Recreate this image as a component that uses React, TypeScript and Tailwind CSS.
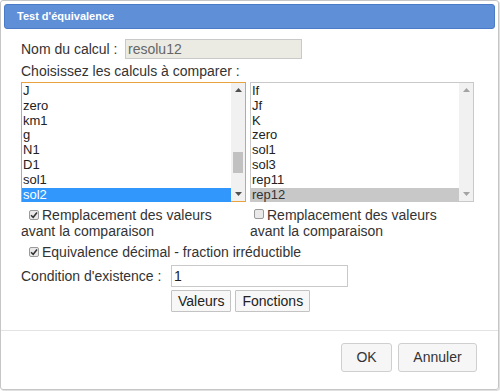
import React from 'react';

const leftItems = ['J', 'zero', 'km1', 'g', 'N1', 'D1', 'sol1', 'sol2'];
const rightItems = ['If', 'Jf', 'K', 'zero', 'sol1', 'sol3', 'rep11', 'rep12'];

const Arrow = ({ up, color }: { up?: boolean; color: string }) => (
    <svg width="7" height="4" viewBox="0 0 7 4">
        {up ? <polygon points="0,4 7,4 3.5,0" fill={color} /> : <polygon points="0,0 7,0 3.5,4" fill={color} />}
    </svg>
);

const ListBox = ({ items, selected, focused }: { items: string[]; selected: number; focused?: boolean }) => (
    <div className={`flex h-[120px] border ${focused ? 'border-[#e8a33c]' : 'border-[#c9c9c9]'} bg-white`}>
        <div className="flex-1 flex flex-col pt-[1px]">
            {items.map((it, i) => (
                <div
                    key={it + i}
                    className={`h-[14.8px] leading-[14.8px] pl-[1px] text-[13px] ${
                        i === selected ? (focused ? 'bg-[#3297fd] text-white' : 'bg-[#c8c8c8] text-[#333]') : 'text-[#222]'
                    }`}
                >
                    {it}
                </div>
            ))}
        </div>
        <div className="w-[14px] bg-[#f1f1f1] flex flex-col items-center justify-between py-[5px] relative">
            <Arrow up color={focused ? '#505050' : '#a3a3a3'} />
            {focused && <div className="absolute left-[2px] right-[2px] top-[69px] h-[21px] bg-[#c1c1c1]" />}
            <Arrow color={focused ? '#505050' : '#a3a3a3'} />
        </div>
    </div>
);

const Check = ({ checked }: { checked?: boolean }) => (
    <span className="inline-flex w-[10px] h-[10px] border border-[#9a9a9a] rounded-[2px] bg-[#e9e9e9] items-center justify-center mr-[3px] relative top-[-1px]">
        {checked && (
            <svg width="8" height="8" viewBox="0 0 8 8">
                <path d="M1 4.2 L3.2 6.3 L7 1.5" stroke="#333" strokeWidth="1.5" fill="none" />
            </svg>
        )}
    </span>
);

export default function App() {
    return (
        <div className="w-[500px] h-[391px] bg-white" style={{ fontFamily: '"Liberation Sans", Arial, sans-serif' }}>
            <div className="w-[499px] h-[390px] border border-[#c6c6c6] rounded-[3px] flex flex-col shadow-[1px_1px_1px_#ddd]">
                <div className="mx-[3px] mt-[3px] h-[25px] bg-[#5f8fd6] border border-[#4b7bc6] rounded-[3px] flex items-center pl-[12px]">
                    <span className="text-white text-[11px] font-bold">Test d'équivalence</span>
                </div>

                <div className="pl-[20px] pr-[25px] text-[14px] text-[#333]">
                    <div className="flex items-center mt-[10px] h-[20px]">
                        <span className="w-[104px]">Nom du calcul :</span>
                        <div className="w-[177px] h-[20px] border border-[#c9c9c9] bg-[#ebebe4] text-[#666] pl-[2px] leading-[18px]">resolu12</div>
                    </div>
                    <div className="h-[16px] leading-[16px] mt-[4px]">Choisissez les calculs à comparer :</div>

                    <div className="grid grid-cols-[225px_224px] gap-[4px] mt-[3px]">
                        <ListBox items={leftItems} selected={7} focused />
                        <ListBox items={rightItems} selected={7} />
                    </div>

                    <div className="grid grid-cols-[229px_224px] mt-[5px] leading-[16px]">
                        <div>
                            <div className="pl-[8px]"><Check checked />Remplacement des valeurs</div>
                            <div>avant la comparaison</div>
                        </div>
                        <div>
                            <div className="pl-[4px]"><Check />Remplacement des valeurs</div>
                            <div>avant la comparaison</div>
                        </div>
                    </div>

                    <div className="pl-[8px] mt-[5px] leading-[16px]"><Check checked />Equivalence décimal - fraction irréductible</div>

                    <div className="flex items-center mt-[5px]">
                        <span className="w-[150px]">Condition d'existence :</span>
                        <div className="w-[177px] h-[22px] border border-[#c9c9c9] bg-white pl-[2px] leading-[20px] text-[#222]">1</div>
                    </div>

                    <div className="flex gap-[4px] mt-[3px] pl-[150px]">
                        <button className="h-[22px] px-[6px] border border-[#c3c3c3] bg-[#f7f7f7] text-[#222] text-[14px] rounded-[1px]">Valeurs</button>
                        <button className="h-[22px] px-[6px] border border-[#c3c3c3] bg-[#f7f7f7] text-[#222] text-[14px] rounded-[1px]">Fonctions</button>
                    </div>
                </div>

                <div className="mt-[18px] border-t border-[#e3e3e3] flex justify-end gap-[6px] pr-[21px] pt-[12px]">
                    <button className="h-[29px] w-[51px] border border-[#cfcfcf] bg-[#f6f6f6] rounded-[3px] text-[#333] text-[14px]">OK</button>
                    <button className="h-[29px] w-[79px] border border-[#cfcfcf] bg-[#f6f6f6] rounded-[3px] text-[#333] text-[14px]">Annuler</button>
                </div>
            </div>
        </div>
    );
}
